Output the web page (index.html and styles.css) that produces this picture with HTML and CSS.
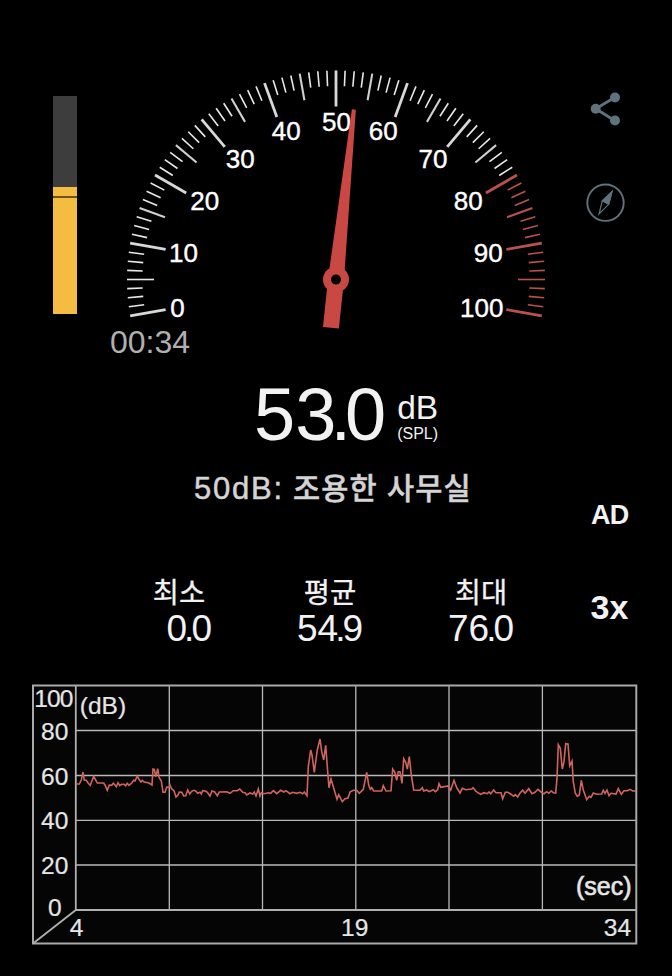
FILE: index.html
```html
<!DOCTYPE html>
<html lang="ko">
<head>
    <meta charset="UTF-8">
    <title>Sound Meter</title>
    <link rel="stylesheet" href="styles.css">
</head>
<body>
<div id="meter">
    <div class="level">
        <div class="level_now"></div>
    </div>
    <div class="display">
        <svg id="gauge" width="472" height="262" viewBox="100 60 472 262">
            <g id="ticks"></g>
            <g class="scale">
                <text x="170.2" y="316.8">0</text>
                <text x="169" y="261.7">10</text>
                <text x="190.2" y="210.3">20</text>
                <text x="225.8" y="168">30</text>
                <text x="271.7" y="140">40</text>
                <text x="322" y="130.7">50</text>
                <text x="368.8" y="140">60</text>
                <text x="418.5" y="168">70</text>
                <text x="453.8" y="210.3">80</text>
                <text x="473.7" y="261.7">90</text>
                <text x="460" y="316.8">100</text>
            </g>
            <g class="needle" transform="translate(336 279.5) rotate(6)">
                <path d="M-2 -171 L2 -171 L8 0 L8 48.5 L-8 48.5 L-8 0 Z"/>
                <circle r="13"/>
                <circle class="hole" r="5"/>
            </g>
        </svg>
        <div class="timer">00:34</div>
        <div class="reading">
            <div class="value">5<span class="dot">3.</span>0</div>
            <div class="unit">
                <div class="db">dB</div>
                <div class="spl">(SPL)</div>
            </div>
        </div>
        <div class="caption">50dB: <span class="ko">조용한 사무실</span></div>
        <div class="stats">
            <div class="stat">
                <div class="name">최소</div>
                <div class="num"><span class="dot">0.</span>0</div>
            </div>
            <div class="stat">
                <div class="name">평균</div>
                <div class="num">5<span class="dot">4.</span>9</div>
            </div>
            <div class="stat">
                <div class="name">최대</div>
                <div class="num">7<span class="dot">6.</span>0</div>
            </div>
        </div>
    </div>
    <div class="tools">
        <svg class="share" width="40" height="40" viewBox="0 0 40 40">
            <path d="M29 8.3 L9.7 19.7 L29 31.7"/>
            <circle cx="29" cy="8.5" r="5"/>
            <circle cx="9.7" cy="19.7" r="5"/>
            <circle cx="29" cy="31.5" r="5"/>
        </svg>
        <svg class="compass" width="40" height="40" viewBox="0 0 40 40">
            <circle cx="19.5" cy="19.7" r="18.2"/>
            <path d="M26 8.6 L16.3 17.9 L13 31 L22.7 21.3 Z"/>
            <path class="north" d="M26 8.6 L16.3 17.9 L22.7 21.3 Z"/>
        </svg>
        <div class="ad">AD</div>
        <div class="speed">3x</div>
    </div>
</div>
<svg id="chart" width="672" height="270" viewBox="0 680 672 270">
    <rect class="back" x="33" y="685.5" width="603.3" height="258"/>
    <path class="grid" d="M76 730.5 H636 M76 775.5 H636 M76 820.3 H636 M76 865 H636 M169.3 686 V910 M262.5 686 V910 M355.8 686 V910 M449 686 V910 M542.4 686 V910"/>
    <path class="axis" d="M75.8 686 V910 H636 M75.8 910 L33 943.5"/>
    <polyline id="wave"/>
    <rect class="frame" x="33" y="685.5" width="603.3" height="258"/>
    <g class="labels">
        <text x="34.3" y="707.3" textLength="39">100</text>
        <text x="41" y="739.7">80</text>
        <text x="41" y="784.5">60</text>
        <text x="41" y="829.3">40</text>
        <text x="41" y="874">20</text>
        <text x="48" y="916">0</text>
        <text x="79.8" y="714.3">(dB)</text>
        <text x="576" y="895" class="sec">(sec)</text>
        <text x="69.7" y="935.5">4</text>
        <text x="341" y="935.8">19</text>
        <text x="603.8" y="935.8">34</text>
    </g>
</svg>
<script type="text/javascript">
    // dial: 0..100 dB over 200 degrees, 8 small steps for every 10 dB
    function drawTicks(){
        var g=document.getElementById('ticks');
        for(var i=0;i<=80;i++){
            var a=(190-i*2.5)*Math.PI/180;
            var len=15.5,cls='small';
            if(i%8==0){
                len=36;
                cls='big';
            }else if(i%4==0){
                len=27;
                cls='mid';
            }
            if(i==4||i==76){
                cls='small';
            }
            var line=document.createElementNS('http://www.w3.org/2000/svg','line');
            line.setAttribute('x1',336+209*Math.cos(a));
            line.setAttribute('y1',279.5-209*Math.sin(a));
            line.setAttribute('x2',336+(209-len)*Math.cos(a));
            line.setAttribute('y2',279.5-(209-len)*Math.sin(a));
            line.setAttribute('class',cls+(i>=64?' loud':''));
            g.appendChild(line);
        }
    }
    var wave='76,784 79.3,784 81.3,780 83,772 84.3,780.3 86.3,780.3 88.3,783.3 90.3,785.3 93.7,776.3 96.3,781 97.3,783 103.7,783 105.3,785.7 107.3,790.3 109.3,785 111.7,785.3 113.3,783.3 115,785 116.3,786.7 118,782.7 119.7,785.7 121.7,784.3 124,784.3 125.7,785.7 127.3,783.3 129,785.3 131.7,783 133.7,780.3 135,781 137.3,776 139.3,779.7 141,782 142.3,780.3 144.3,782 149,783 152,785 153,769 154.3,769.3 155.7,776.7 157.7,768.7 159,777.3 161.3,781 163,792.3 165,792.3 166.7,787 169.3,787.3 170,785 171.7,789 174,790.7 176,797 178,795 179.3,792 181.7,792.3 183.7,796 185.7,795.7 187.7,790 189.7,794 191.7,791.3 193.7,790.3 195.7,791 197.7,793.3 '
        +'200,792.3 201.3,794 202.7,790.7 205.3,791 207.3,792.3 210,796 212,791 214.7,792 217.3,795.7 219.3,792 226.7,791.7 230,793.3 233.3,790.7 237.3,790.7 239.7,789 242.7,792.3 245,792.7 246.7,795 250,793 252.7,794 254.3,792 256,796 258.3,789 260,796 261.3,792.7 264,793.7 268.3,792.7 270.7,793.3 273.3,790.7 276.7,793.7 280.7,790.3 284,792 286,790.7 290,793.7 292.7,792.3 296.7,793.3 300,792.3 302.7,793.7 304.3,792 307,795.7 308.3,766.7 310.7,750 312,755 314.3,772.3 317.3,750 320,739 321.7,751.7 323.7,760 325.7,745.3 327.3,766.7 329,787.7 331,779 333.3,786.7 337,799.3 338.7,794.7 342.3,801.7 345,798.7 348,798 350,792 353.3,790.3 356.7,790.3 359.3,793.3 363.3,789.3 366.7,772.3 368.7,785 370.3,789.3 371.7,787.7 373.7,791 381.7,791 383.3,785.7 386,791 391,790.7 392.7,769 394.7,772 396.7,780.3 398.3,771.7 400,771.7 402,783.3 403.7,758.7 405.7,762.3 407.3,769 409.3,756.7 411.3,775 413.7,790 416.7,790.3 '
        +'420,790.3 422.3,787.7 423.7,791 426.7,790 429.3,791.7 433.3,789.7 435.3,791.7 437.7,789.7 439,783.7 440.7,787.3 448.3,786 450.7,790 454,780.3 456.7,787.7 460,793 462.3,788.3 465.7,789.7 471.7,789 473,787.7 476,791.3 480.7,794.3 484,792.7 487.3,793.7 489,792 490.7,793.7 493.7,790 496,792.7 501,792.7 502.7,798.7 505.3,792.3 507.7,792.3 510.7,794 513.7,796.3 515.3,794.7 517.7,797 520,793 522.7,790.3 525,793.3 528.7,788.7 532,793.7 535,792.3 538,789.3 541.3,792.3 544,793.7 546.7,791.7 548.7,793.3 551.3,791 553.3,792.7 555.7,793 557,778.3 558.3,744.7 560.3,748.3 562.3,769 564,761.7 565.7,743.7 568,744 569.7,765.7 572,761 573.3,781.7 575.3,793.3 577.3,796.3 579.3,795 581.3,780.3 583.3,790 586.7,799.7 589.3,796.3 591,797.3 593.3,793 596.7,794.3 601.7,794 603.3,790.3 605,793.3 607,790 609,795.7 611,793.3 616,794 618.3,788.7 621.3,794.3 624,790.7 627.3,790.7 630,789.3 632.7,791 635.3,791';
    drawTicks();
    document.getElementById('wave').setAttribute('points',wave);
</script>
</body>
</html>
```
FILE: styles.css
```css
body {
    margin: 0;
    background-color: #000;
    color: #f2f2f2;
    font-family: "Liberation Sans", "Noto Sans CJK KR", sans-serif;
}

#meter {
    display: flex;
    height: 680px;
}

.level {
    width: 24px;
    height: 218px;
    margin: 96px 23px 0 53px;
    display: flex;
    flex-direction: column;
    justify-content: flex-end;
    background-color: #3d3d3d;
}

.level_now {
    height: 127px;
    background: linear-gradient(#f5bc42 9px, #6e531a 9px, #6e531a 11px, #f5bc42 11px);
}

.display {
    width: 472px;
    padding-top: 60px;
}

#gauge {
    display: block;
    overflow: visible;
}

.small {
    stroke: #e8e8e8;
    stroke-width: 1.6;
}

.mid {
    stroke: #cfcfcf;
    stroke-width: 2.1;
}

.big {
    stroke: #d8d8d8;
    stroke-width: 2.8;
}

.loud {
    stroke: #b8524f;
}

.scale {
    font-size: 26px;
    fill: #fff;
    stroke: #fff;
    stroke-width: 0.4;
}

.needle {
    fill: #c94843;
}

.hole {
    fill: #000;
}

.timer {
    height: 40px;
    line-height: 40px;
    padding-left: 10px;
    font-size: 32px;
    color: #b0b0b0;
}

.reading {
    display: flex;
    height: 74px;
    margin-top: 16px;
    padding-left: 154px;
}

.value {
    font-size: 74px;
    line-height: 74px;
}

.dot {
    letter-spacing: -0.08em;
}

.unit {
    padding: 13px 0 0 11px;
}

.db {
    font-size: 33.5px;
    line-height: 33px;
}

.spl {
    margin-top: 2px;
    font-size: 16px;
    line-height: 16px;
}

.caption {
    height: 40px;
    line-height: 40px;
    margin-top: 17px;
    padding-left: 94px;
    font-size: 31px;
    letter-spacing: 1.8px;
    white-space: nowrap;
    color: #d4d4d4;
    -webkit-text-stroke: 0.5px #d4d4d4;
}

.ko {
    font-family: "Noto Sans CJK KR", sans-serif;
    font-weight: 500;
    font-size: 29.5px;
    line-height: 1;
    letter-spacing: 1.1px;
    margin-left: -1.5px;
}

.stats {
    display: flex;
    gap: 85px;
    margin-top: 67px;
    padding-left: 46px;
}

.stat {
    width: 66px;
}

.name {
    height: 33px;
    line-height: 30px;
    font-size: 28.5px;
    font-family: "Noto Sans CJK KR", sans-serif;
    text-align: center;
    white-space: nowrap;
    -webkit-text-stroke: 0.3px #f2f2f2;
}

.num {
    font-size: 37px;
    line-height: 40px;
    text-align: right;
    white-space: nowrap;
}

.tools {
    width: 60px;
    margin-left: 14px;
    padding-top: 89px;
}

.tools svg {
    display: block;
    margin-bottom: 54px;
}

.share {
    fill: #5f737d;
}

.share path {
    fill: none;
    stroke: #5f737d;
    stroke-width: 2.8;
}

.compass {
    fill: none;
    stroke: #5f737d;
    stroke-width: 1.9;
}

.compass path {
    stroke-width: 1.2;
}

.compass .north {
    fill: #5f737d;
}

.ad {
    margin-top: 277px;
    padding-left: 5px;
    font-size: 27px;
    line-height: 30px;
    font-weight: bold;
    letter-spacing: -0.8px;
}

.tools svg.compass {
    margin-bottom: 0;
}

.speed {
    margin-top: 58px;
    padding-left: 4.5px;
    font-size: 34px;
    line-height: 38px;
    font-weight: bold;
}

#chart {
    display: block;
}

.back {
    fill: #050505;
}

.grid {
    fill: none;
    stroke: #b9b9b9;
    stroke-width: 1.3;
}

.axis {
    fill: none;
    stroke: #b0b0b0;
    stroke-width: 1.8;
}

.frame {
    fill: none;
    stroke: #a9a9a9;
    stroke-width: 2;
}

#wave {
    fill: none;
    stroke: #d0645e;
    stroke-width: 1.6;
}

.labels {
    font-size: 24.5px;
    fill: #e6e6e6;
    stroke: #e6e6e6;
    stroke-width: 0.2;
}

.sec {
    font-size: 25px;
    stroke-width: 0.6;
}
```
